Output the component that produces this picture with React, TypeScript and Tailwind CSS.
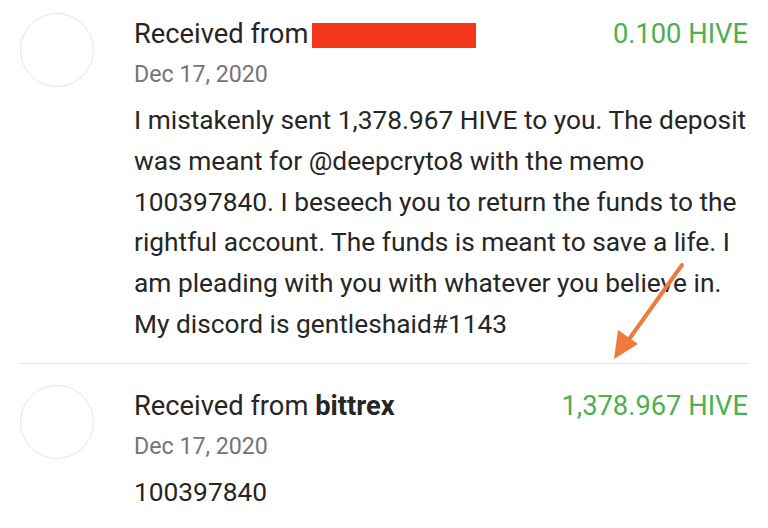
import React from 'react'

type Tx = {
  from: React.ReactNode
  amount: string
  date: string
  memo: string
}

function TxRow({ tx, first }: { tx: Tx; first?: boolean }) {
  return (
    <div className={`flex ${first ? 'pt-[13px] pb-[18px] border-b border-[#e3e3e3]' : 'pt-[21px] pb-4'}`}>
      <div className="w-[74px] h-[74px] shrink-0 rounded-full border border-[#e6e6e6]" />
      <div className="flex-1 ml-[40px]">
        <div className="flex items-start justify-between">
          <div className="text-[27.3px] leading-[42px] text-[#262626]">{tx.from}</div>
          <div className="text-[27.3px] leading-[42px] text-[#4caf50]">{tx.amount}</div>
        </div>
        <div className="text-[23.2px] leading-[28px] text-[#757575] mt-[5px]">{tx.date}</div>
        <div className="text-[26.3px] leading-[40.8px] text-[#262626] mt-[12px]">{tx.memo}</div>
      </div>
    </div>
  )
}

export default function App() {
  const rows: Tx[] = [
    {
      from: (
        <span className="flex items-center">
          Received from
          <span className="inline-block w-[164px] h-[25px] bg-[#f4361a] ml-[4px] mt-[2px]" />
        </span>
      ),
      amount: '0.100 HIVE',
      date: 'Dec 17, 2020',
      memo:
        'I mistakenly sent 1,378.967 HIVE to you. The deposit was meant for @deepcryto8 with the memo 100397840. I beseech you to return the funds to the rightful account. The funds is meant to save a life. I am pleading with you with whatever you believe in. My discord is gentleshaid#1143',
    },
    {
      from: (
        <span>
          Received from <span className="font-bold">bittrex</span>
        </span>
      ),
      amount: '1,378.967 HIVE',
      date: 'Dec 17, 2020',
      memo: '100397840',
    },
  ]

  return (
    <div className="relative w-[768px] h-[528px] overflow-hidden bg-white px-[20px] font-['Roboto',sans-serif]">
      <TxRow tx={rows[0]} first />
      <TxRow tx={rows[1]} />
      <svg className="absolute left-0 top-0" width="768" height="528" viewBox="0 0 768 528">
        <line x1="682" y1="265" x2="627" y2="342" stroke="#f07a3d" strokeWidth="4" strokeLinecap="round" />
        <polygon points="614,359 618,330 638,344" fill="#f07a3d" />
      </svg>
    </div>
  )
}
